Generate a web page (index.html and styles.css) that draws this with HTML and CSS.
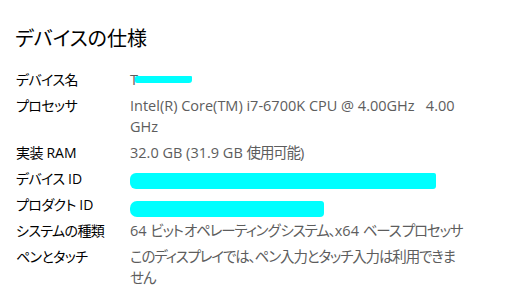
FILE: index.html
```html
<!DOCTYPE html>
<html lang="ja">
<head>
<meta charset="utf-8">
<link rel="stylesheet" href="styles.css">
</head>
<body>
<main class="page">
  <h1 class="title">デバイスの仕様</h1>
  <dl class="specs">
    <dt><span class="ja">デバイス名</span></dt>
    <dd class="masked"><span class="under">T</span><span class="mask mask-name"></span></dd>
    <dt><span class="ja">プロセッサ</span></dt>
    <dd>Intel(R) Core(TM) i7-6700K CPU @ 4.00GHz&nbsp;&nbsp;&nbsp;4.00 GHz</dd>
    <dt><span class="ja">実装</span> RAM</dt>
    <dd>32.0 GB (31.9 GB <span class="ja">使用可能</span>)</dd>
    <dt><span class="ja">デバイス</span> ID</dt>
    <dd class="masked"><span class="mask mask-device"></span></dd>
    <dt><span class="ja">プロダクト</span> ID</dt>
    <dd class="masked"><span class="mask mask-product"></span></dd>
    <dt><span class="ja">システムの種類</span></dt>
    <dd>64 <span class="ja">ビット オペレーティング システム、</span>x64 <span class="ja">ベース プロセッサ</span></dd>
    <dt><span class="ja">ペンとタッチ</span></dt>
    <dd><span class="ja">このディスプレイでは、ペン入力とタッチ入力は利用できません</span></dd>
  </dl>
</main>
</body>
</html>
```
FILE: styles.css
```css
html, body {
  margin: 0;
  padding: 0;
  background: #ffffff;
}
.page {
  padding: 25px 0 0 16px;
  font-family: "Open Sans", "Noto Sans CJK JP", sans-serif;
  font-feature-settings: "palt";
}
.title {
  margin: 0 0 16px -1px;
  font-size: 20px;
  line-height: 28px;
  font-weight: 400;
  color: #000000;
}
.specs {
  margin: 0;
  display: grid;
  grid-template-columns: 114px 335px;
  row-gap: 5px;
  line-height: 21px;
}
.specs dt {
  color: #000000;
  font-size: 14px;
}
.specs dt .ja {
  letter-spacing: -0.6px;
}
.specs dd {
  margin: 0;
  color: #5d5d5d;
  font-size: 14.5px;
  min-height: 21px;
}
.specs dd .ja {
  letter-spacing: -1.15px;
  word-spacing: -1.5px;
}
.masked {
  position: relative;
}
.under {
  color: #5d5d5d;
}
.mask {
  position: absolute;
  background: #00ffff;
}
.mask-name {
  left: 5px;
  top: 7px;
  width: 57px;
  height: 7px;
  border-radius: 2px 1px 3px 2px;
}
.mask-device {
  left: 0;
  top: 5px;
  width: 306px;
  height: 16px;
  border-radius: 6px 2px 3px 6px;
}
.mask-product {
  left: 0;
  top: 7px;
  width: 194px;
  height: 16px;
  border-radius: 7px 3px 4px 7px;
}
```
